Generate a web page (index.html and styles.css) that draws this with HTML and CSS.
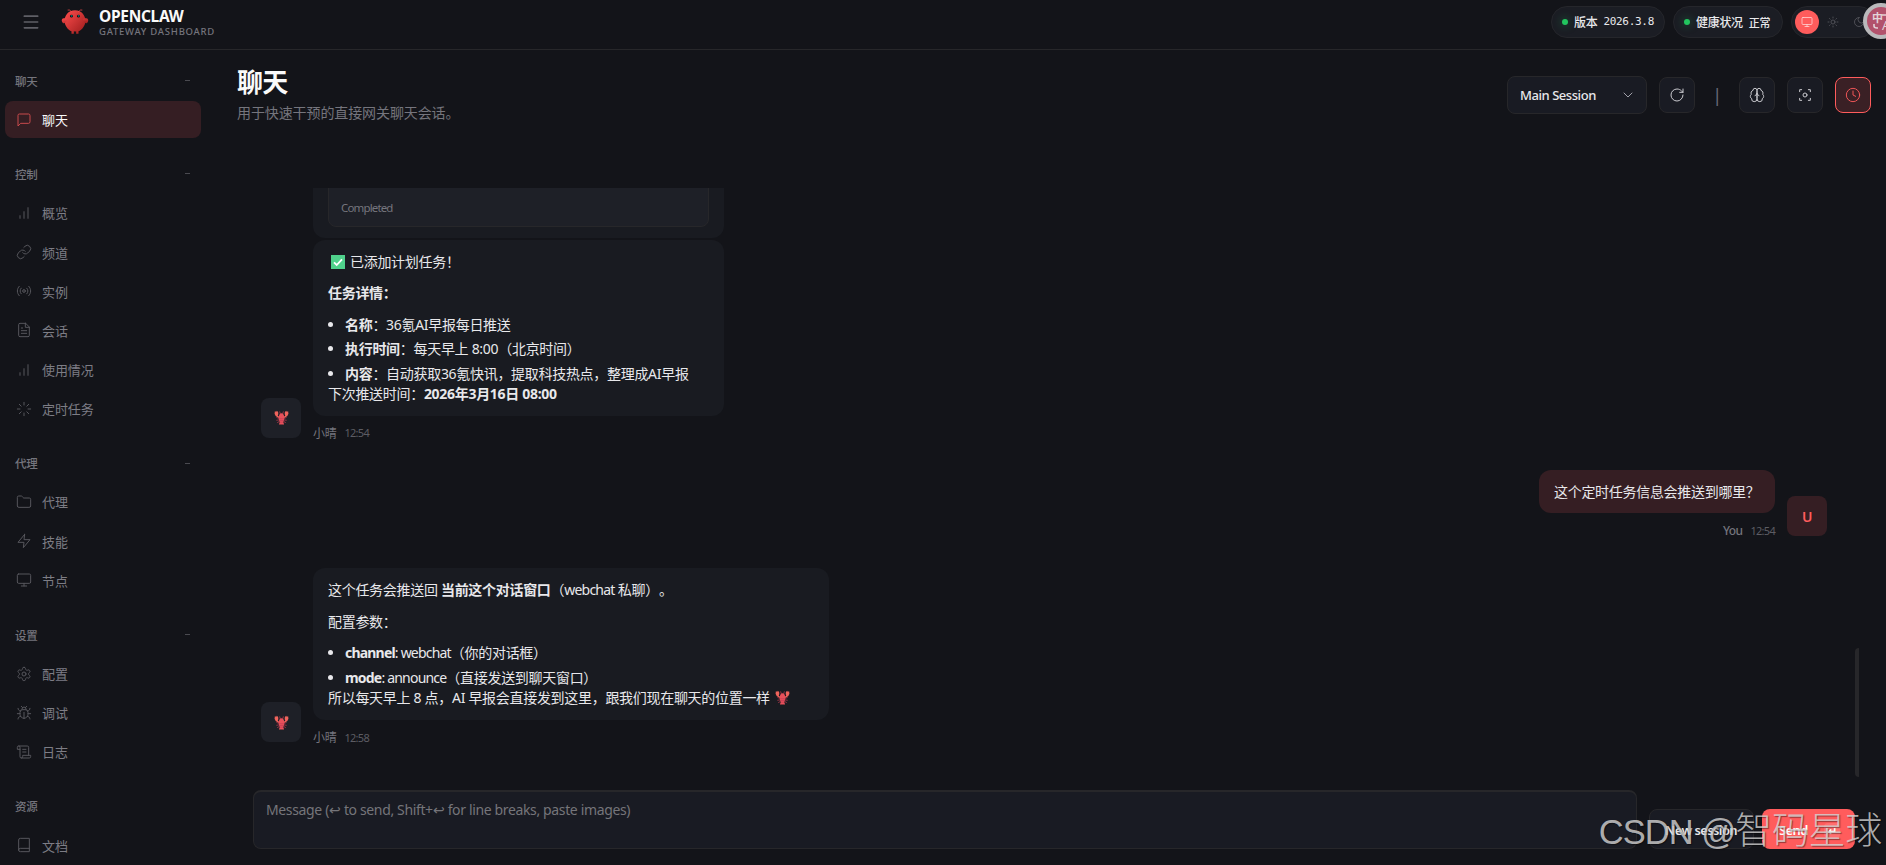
FILE: index.html
```html
<!DOCTYPE html>
<html lang="zh-CN">
  <head>
    <meta charset="UTF-8" />
    <title>OpenClaw Control</title>
    <link rel="stylesheet" href="styles.css">
  </head>
  <body>
    <svg class="sprite" width="0" height="0">
      <symbol id="i-menu" viewBox="0 0 24 24"><path d="M4 5h16M4 12h16M4 19h16"/></symbol>
      <symbol id="i-message" viewBox="0 0 24 24"><path d="M21 15a2 2 0 0 1-2 2H7l-4 4V5a2 2 0 0 1 2-2h14a2 2 0 0 1 2 2z"/></symbol>
      <symbol id="i-chart" viewBox="0 0 24 24"><path d="M12 20V10M18 20V4M6 20v-4"/></symbol>
      <symbol id="i-link" viewBox="0 0 24 24"><path d="M10 13a5 5 0 0 0 7.54.54l3-3a5 5 0 0 0-7.07-7.07l-1.72 1.71"/><path d="M14 11a5 5 0 0 0-7.54-.54l-3 3a5 5 0 0 0 7.07 7.07l1.71-1.71"/></symbol>
      <symbol id="i-radio" viewBox="0 0 24 24"><circle cx="12" cy="12" r="2"/><path d="M4.9 19.1C1 15.2 1 8.8 4.9 4.9M7.8 16.2c-2.3-2.3-2.3-6.1 0-8.5M16.2 7.8c2.3 2.3 2.3 6.1 0 8.5M19.1 4.9C23 8.8 23 15.1 19.1 19"/></symbol>
      <symbol id="i-file" viewBox="0 0 24 24"><path d="M14.5 2H6a2 2 0 0 0-2 2v16a2 2 0 0 0 2 2h12a2 2 0 0 0 2-2V7.5L14.5 2z"/><path d="M14 2v6h6M16 13H8M16 17H8M10 9H8"/></symbol>
      <symbol id="i-loader" viewBox="0 0 24 24"><path d="M12 2v4M12 18v4M4.93 4.93l2.83 2.83M16.24 16.24l2.83 2.83M2 12h4M18 12h4M4.93 19.07l2.83-2.83M16.24 7.76l2.83-2.83"/></symbol>
      <symbol id="i-folder" viewBox="0 0 24 24"><path d="M20 20a2 2 0 0 0 2-2V8a2 2 0 0 0-2-2h-7.9a2 2 0 0 1-1.69-.9L9.6 3.9A2 2 0 0 0 7.93 3H4a2 2 0 0 0-2 2v13a2 2 0 0 0 2 2Z"/></symbol>
      <symbol id="i-zap" viewBox="0 0 24 24"><path d="M13 2 3 14h9l-1 8 10-12h-9l1-8z"/></symbol>
      <symbol id="i-monitor" viewBox="0 0 24 24"><rect x="2" y="3" width="20" height="14" rx="2"/><path d="M8 21h8M12 17v4"/></symbol>
      <symbol id="i-settings" viewBox="0 0 24 24"><path d="M12.22 2h-.44a2 2 0 0 0-2 2v.18a2 2 0 0 1-1 1.73l-.43.25a2 2 0 0 1-2 0l-.15-.08a2 2 0 0 0-2.73.73l-.22.38a2 2 0 0 0 .73 2.73l.15.1a2 2 0 0 1 1 1.72v.51a2 2 0 0 1-1 1.74l-.15.09a2 2 0 0 0-.73 2.73l.22.38a2 2 0 0 0 2.73.73l.15-.08a2 2 0 0 1 2 0l.43.25a2 2 0 0 1 1 1.73V20a2 2 0 0 0 2 2h.44a2 2 0 0 0 2-2v-.18a2 2 0 0 1 1-1.73l.43-.25a2 2 0 0 1 2 0l.15.08a2 2 0 0 0 2.73-.73l.22-.39a2 2 0 0 0-.73-2.73l-.15-.08a2 2 0 0 1-1-1.74v-.5a2 2 0 0 1 1-1.74l.15-.09a2 2 0 0 0 .73-2.73l-.22-.38a2 2 0 0 0-2.73-.73l-.15.08a2 2 0 0 1-2 0l-.43-.25a2 2 0 0 1-1-1.73V4a2 2 0 0 0-2-2z"/><circle cx="12" cy="12" r="3"/></symbol>
      <symbol id="i-bug" viewBox="0 0 24 24"><path d="m8 2 1.88 1.88M14.12 3.88 16 2M9 7.13v-1a3 3 0 1 1 6 0v1M12 20a6 6 0 0 1-6-6v-3a4 4 0 0 1 4-4h4a4 4 0 0 1 4 4v3a6 6 0 0 1-6 6M12 20v-9M6.53 9C4.6 8.8 3 7.1 3 5M6 13H2M3 21c0-2.1 1.7-3.9 3.8-4M20.97 5c0 2.1-1.6 3.8-3.5 4M22 13h-4M17.2 17c2.1.1 3.8 1.9 3.8 4"/></symbol>
      <symbol id="i-scroll" viewBox="0 0 24 24"><path d="M8 21h12a2 2 0 0 0 2-2v-2H10v2a2 2 0 1 1-4 0V5a2 2 0 1 0-4 0v3h4"/><path d="M19 17V5a2 2 0 0 0-2-2H4M15 8h-5M15 12h-5"/></symbol>
      <symbol id="i-book" viewBox="0 0 24 24"><path d="M4 19.5v-15A2.5 2.5 0 0 1 6.5 2H20v20H6.5a2.5 2.5 0 0 1 0-5H20"/></symbol>
      <symbol id="i-sun" viewBox="0 0 24 24"><circle cx="12" cy="12" r="4"/><path d="M12 2v2M12 20v2M4.93 4.93l1.41 1.41M17.66 17.66l1.41 1.41M2 12h2M20 12h2M6.34 17.66l-1.41 1.41M19.07 4.93l-1.41 1.41"/></symbol>
      <symbol id="i-moon" viewBox="0 0 24 24"><path d="M12 3a6 6 0 0 0 9 9 9 9 0 1 1-9-9Z"/></symbol>
      <symbol id="i-chevron" viewBox="0 0 24 24"><path d="m6 9 6 6 6-6"/></symbol>
      <symbol id="i-refresh" viewBox="0 0 24 24"><path d="M21 12a9 9 0 1 1-9-9c2.52 0 4.93 1 6.74 2.74L21 8"/><path d="M21 3v5h-5"/></symbol>
      <symbol id="i-brain" viewBox="0 0 24 24"><path d="M12 5a3 3 0 1 0-5.997.125 4 4 0 0 0-2.526 5.77 4 4 0 0 0 .556 6.588A4 4 0 1 0 12 18Z"/><path d="M12 5a3 3 0 1 1 5.997.125 4 4 0 0 1 2.526 5.77 4 4 0 0 1-.556 6.588A4 4 0 1 1 12 18Z"/><path d="M15 13a4.5 4.5 0 0 1-3-4 4.5 4.5 0 0 1-3 4"/></symbol>
      <symbol id="i-focus" viewBox="0 0 24 24"><path d="M4 7V4h3M20 7V4h-3M4 17v3h3M20 17v3h-3"/><circle cx="12" cy="12" r="3"/></symbol>
      <symbol id="i-clock" viewBox="0 0 24 24"><circle cx="12" cy="12" r="10"/><path d="M12 6v6l4 2"/></symbol>
      <symbol id="i-lobster" viewBox="0 0 16 16">
        <path fill="#f0645c" d="M1 1l1.2 1L3 .8l1.4 1.4.2 2L4 6 6 7.4 5 8.6 1.8 6.4.6 4zM15 1l-1.2 1L13 .8l-1.4 1.4-.2 2L12 6l-2 1.4 1 1.2 3.2-2.200L15.400 4z"/>
        <path fill="none" stroke="#a83548" stroke-width=".9" d="M6.800 4.500 6 1.500M9.200 4.500 10 1.500M5.500 9 2.600 8M5.500 10.500 2.500 11M6 12l-2.600 1.500M10.500 9l2.900-1M10.500 10.500l3 .5M10 12l2.600 1.500"/>
        <path fill="#e8505a" d="M8 3.500c1.800 0 3 2.300 3 4.700 0 2-.8 3.300-1.200 4.600l1 2.600H5.200l1-2.600C5.800 11.500 5 10.200 5 8.200c0-2.400 1.200-4.700 3-4.700z"/>
        <path fill="none" stroke="#c23b55" stroke-width=".7" d="M5.600 9.300h4.800M6 11.200h4M6.200 13h3.600"/>
      </symbol>
    </svg>

    <header class="topbar">
      <button class="menu-toggle"><svg class="icon"><use href="#i-menu"/></svg></button>
      <svg class="logo" viewBox="0 0 120 120">
        <defs>
          <linearGradient id="claw" x1="0" y1="0" x2="1" y2="1">
            <stop offset="0" stop-color="#ff4d4d"/>
            <stop offset="1" stop-color="#991b1b"/>
          </linearGradient>
        </defs>
        <path fill="url(#claw)" d="M60 10C30 10 15 35 15 55s15 40 30 45v10h10v-10s5 2 10 0v10h10v-10c15-5 30-25 30-45S90 10 60 10z"/>
        <path fill="url(#claw)" d="M20 45C5 40 0 50 5 60s15 5 20-5c3-7 0-10-5-10zM100 45c15-5 20 5 15 15s-15 5-20-5c-3-7 0-10 5-10z"/>
        <path fill="none" stroke="#ff4d4d" stroke-width="3" stroke-linecap="round" d="M45 15Q35 5 30 8M75 15Q85 5 90 8"/>
        <circle cx="45" cy="35" r="6" fill="#050810"/><circle cx="75" cy="35" r="6" fill="#050810"/>
        <circle cx="46" cy="34" r="2.500" fill="#00e5cc"/><circle cx="76" cy="34" r="2.500" fill="#00e5cc"/>
      </svg>
      <div class="brand">
        <div class="brand-title">OPENCLAW</div>
        <div class="brand-sub">GATEWAY DASHBOARD</div>
      </div>
      <div class="topbar-status">
        <div class="pill pill-version"><span class="dot"></span><span>版本</span><span class="mono">2026.3.8</span></div>
        <div class="pill pill-health"><span class="dot"></span><span>健康状况</span><span class="mono">正常</span></div>
        <div class="theme-toggle">
          <button class="theme-btn active"><svg class="icon"><use href="#i-monitor"/></svg></button>
          <button class="theme-btn"><svg class="icon"><use href="#i-sun"/></svg></button>
          <button class="theme-btn"><svg class="icon"><use href="#i-moon"/></svg></button>
        </div>
      </div>
      <div class="translate-badge">
        <span class="zh">中</span><span class="en">A</span>
        <svg class="swap" viewBox="0 0 28 28"><path d="M7 17v2q0 2 3 2h1M15 8h5"/></svg>
      </div>
    </header>

    <div class="shell">
      <nav class="sidebar">
        <div class="nav-group">
          <div class="nav-label"><span>聊天</span><span class="fold"></span></div>
          <a class="nav-item active"><svg class="icon"><use href="#i-message"/></svg>聊天</a>
        </div>
        <div class="nav-group">
          <div class="nav-label"><span>控制</span><span class="fold"></span></div>
          <a class="nav-item"><svg class="icon"><use href="#i-chart"/></svg>概览</a>
          <a class="nav-item"><svg class="icon"><use href="#i-link"/></svg>频道</a>
          <a class="nav-item"><svg class="icon"><use href="#i-radio"/></svg>实例</a>
          <a class="nav-item"><svg class="icon"><use href="#i-file"/></svg>会话</a>
          <a class="nav-item"><svg class="icon"><use href="#i-chart"/></svg>使用情况</a>
          <a class="nav-item"><svg class="icon"><use href="#i-loader"/></svg>定时任务</a>
        </div>
        <div class="nav-group">
          <div class="nav-label"><span>代理</span><span class="fold"></span></div>
          <a class="nav-item"><svg class="icon"><use href="#i-folder"/></svg>代理</a>
          <a class="nav-item"><svg class="icon"><use href="#i-zap"/></svg>技能</a>
          <a class="nav-item"><svg class="icon"><use href="#i-monitor"/></svg>节点</a>
        </div>
        <div class="nav-group">
          <div class="nav-label"><span>设置</span><span class="fold"></span></div>
          <a class="nav-item"><svg class="icon"><use href="#i-settings"/></svg>配置</a>
          <a class="nav-item"><svg class="icon"><use href="#i-bug"/></svg>调试</a>
          <a class="nav-item"><svg class="icon"><use href="#i-scroll"/></svg>日志</a>
        </div>
        <div class="nav-group">
          <div class="nav-label"><span>资源</span></div>
          <a class="nav-item"><svg class="icon"><use href="#i-book"/></svg>文档</a>
        </div>
      </nav>

      <main class="content">
        <div class="content-header">
          <div>
            <h1>聊天</h1>
            <p class="page-sub">用于快速干预的直接网关聊天会话。</p>
          </div>
          <div class="chat-controls">
            <div class="session-select">Main Session<svg class="icon"><use href="#i-chevron"/></svg></div>
            <button class="icon-btn"><svg class="icon"><use href="#i-refresh"/></svg></button>
            <span class="sep">|</span>
            <button class="icon-btn"><svg class="icon"><use href="#i-brain"/></svg></button>
            <button class="icon-btn"><svg class="icon"><use href="#i-focus"/></svg></button>
            <button class="icon-btn active"><svg class="icon"><use href="#i-clock"/></svg></button>
          </div>
        </div>

        <div class="chat">
          <div class="thread">
            <div class="group">
              <div class="avatar"><svg class="lobster"><use href="#i-lobster"/></svg></div>
              <div class="messages">
                <div class="bubble tool-bubble">
                  <div class="tool-card">Completed</div>
                </div>
                <div class="bubble bubble-task">
                  <p><span class="check"><svg viewBox="0 0 14 14"><path d="M3 7.300l2.700 2.700L11 4.300"/></svg></span>已添加计划任务！</p>
                  <p><strong>任务详情：</strong></p>
                  <ul>
                    <li><strong>名称</strong>：36氪AI早报每日推送</li>
                    <li><strong>执行时间</strong>：每天早上 8:00（北京时间）</li>
                    <li><strong>内容</strong>：自动获取36氪快讯，提取科技热点，整理成AI早报</li>
                  </ul>
                  <p class="tail">下次推送时间：<strong>2026年3月16日 08:00</strong></p>
                </div>
                <div class="meta"><span class="sender">小晴</span><span class="time">12:54</span></div>
              </div>
            </div>

            <div class="group user">
              <div class="messages">
                <div class="bubble"><p>这个定时任务信息会推送到哪里？</p></div>
                <div class="meta"><span class="sender">You</span><span class="time">12:54</span></div>
              </div>
              <div class="avatar">U</div>
            </div>

            <div class="group">
              <div class="avatar"><svg class="lobster"><use href="#i-lobster"/></svg></div>
              <div class="messages">
                <div class="bubble bubble-answer">
                  <p>这个任务会推送回 <strong>当前这个对话窗口</strong>（<span class="param">webchat</span> 私聊）。</p>
                  <p>配置参数：</p>
                  <ul>
                    <li><span class="param"><strong>channel</strong>: webchat</span>（你的对话框）</li>
                    <li><span class="param"><strong>mode</strong>: announce</span>（直接发送到聊天窗口）</li>
                  </ul>
                  <p class="tail">所以每天早上 8 点，AI 早报会直接发到这里，跟我们现在聊天的位置一样 <svg class="lobster"><use href="#i-lobster"/></svg></p>
                </div>
                <div class="meta"><span class="sender">小晴</span><span class="time">12:58</span></div>
              </div>
            </div>
          </div>
          <div class="scroll-thumb"></div>
        </div>

        <div class="compose">
          <div class="compose-input">Message (↩ to send, Shift+↩ for line breaks, paste images)</div>
          <button class="btn btn-new">New session</button>
          <button class="btn btn-send">Send<span class="kbd">↵</span></button>
        </div>
      </main>
    </div>

    <div class="watermark"><span class="wm-latin">CSDN @</span><span>智码星球</span></div>
  </body>
</html>
```
FILE: styles.css
```css
:root {
  --bg: #131419;
  --card: #191b21;
  --elevated: #1e2027;
  --input: #191b23;
  --border: #27272a;
  --text: #e8e8eb;
  --muted: #75757d;
  --accent: #ff5c5c;
  --accent-subtle: #351e23;
}
* {
  box-sizing: border-box;
}
body {
  margin: 0;
  height: 865px;
  overflow: hidden;
  background: var(--bg);
  color: var(--text);
  font-family: "Noto Sans", "Noto Sans CJK SC", sans-serif;
  font-size: 14px;
  letter-spacing: -0.300px;
  text-spacing-trim: space-all;
}
button {
  font: inherit;
  letter-spacing: inherit;
  color: inherit;
  background: none;
  border: none;
  padding: 0;
}
h1, p, ul {
  margin: 0;
  padding: 0;
}
.sprite {
  position: absolute;
}
.icon {
  width: 16px;
  height: 16px;
  flex: none;
  fill: none;
  stroke: currentColor;
  stroke-width: 1.5;
  stroke-linecap: round;
  stroke-linejoin: round;
}

/* top bar */
.topbar {
  display: flex;
  align-items: center;
  height: 50px;
  padding: 0 11px 6px 21px;
  border-bottom: 1px solid var(--border);
}
.menu-toggle {
  display: flex;
  color: #5f5f66;
}
.menu-toggle .icon {
  width: 20px;
  height: 20px;
  stroke-width: 2;
}
.logo {
  width: 28px;
  height: 28px;
  margin: 0 10px 0 20px;
}
.brand-title {
  margin-top: 1px;
  color: #fafafa;
  font-size: 15.500px;
  font-weight: 700;
  line-height: 18px;
  letter-spacing: -0.300px;
}
.brand-sub {
  color: var(--muted);
  font-size: 9.500px;
  font-weight: 500;
  line-height: 13px;
  letter-spacing: 0.750px;
}
.topbar-status {
  display: flex;
  gap: 8px;
  margin-left: auto;
}
.pill {
  display: flex;
  align-items: center;
  gap: 6px;
  height: 32px;
  padding: 0 10px;
  border: 1px solid #25262b;
  border-radius: 16px;
  background: #1b1d24;
  font-size: 12px;
  font-weight: 500;
  white-space: nowrap;
}
.pill-version {
  width: 114px;
}
.pill-health {
  width: 110px;
}
.dot {
  width: 6px;
  height: 6px;
  flex: none;
  border-radius: 50%;
  background: #22c55e;
  box-shadow: 0 0 8px rgba(34, 197, 94, 0.5);
}
.mono {
  font-family: "DejaVu Sans Mono", "Noto Sans CJK SC", monospace;
  font-size: 11px;
}
.theme-toggle {
  display: flex;
  align-items: center;
  gap: 2px;
  width: 84px;
  height: 32px;
  padding: 0 3px;
  border: 1px solid #25262b;
  border-radius: 16px;
  background: #1b1d24;
}
.theme-btn {
  display: flex;
  align-items: center;
  justify-content: center;
  width: 24px;
  height: 24px;
  border-radius: 50%;
  color: #5d5d64;
}
.theme-btn .icon {
  width: 12px;
  height: 12px;
}
.theme-btn.active {
  background: var(--accent);
  color: #ffd9d9;
}
.translate-badge {
  position: absolute;
  top: 3px;
  right: -13px;
  width: 36px;
  height: 36px;
  border: 4px solid #b9b9bb;
  border-radius: 50%;
  background: #b2526c;
  color: #e3d3d8;
  line-height: 1;
}
.translate-badge .zh {
  position: absolute;
  left: 5px;
  top: 5px;
  font-size: 11px;
  font-weight: 700;
}
.translate-badge .en {
  position: absolute;
  left: 15px;
  top: 12px;
  font-size: 13px;
}
.translate-badge .swap {
  display: block;
  width: 28px;
  height: 28px;
  fill: none;
  stroke: #e3d3d8;
  stroke-width: 1.600;
}

/* navigation */
.shell {
  display: flex;
  height: 815px;
}
.sidebar {
  display: flex;
  flex-direction: column;
  gap: 23.500px;
  flex: none;
  width: 221px;
  padding: 18.800px 20px 0 5px;
  overflow: hidden;
}
.nav-group {
  display: flex;
  flex-direction: column;
  gap: 2px;
}
.nav-label {
  display: flex;
  align-items: center;
  justify-content: space-between;
  height: 24px;
  margin-bottom: 6.500px;
  padding: 0 11px 0 10px;
  color: var(--muted);
  font-size: 11.500px;
  font-weight: 500;
}
.fold {
  width: 5px;
  height: 1px;
  background: #4a4a50;
}
.nav-item {
  display: flex;
  align-items: center;
  gap: 10px;
  height: 37.200px;
  padding: 0 11px 0.500px;
  border-radius: 8px;
  color: #7d7d85;
  font-size: 13px;
  letter-spacing: -0.100px;
}
.nav-item .icon {
  color: #56565c;
}
.nav-item.active {
  background: var(--accent-subtle);
  color: #fafafa;
}
.nav-item.active .icon {
  color: #c94a4c;
}

/* main column */
.content {
  display: flex;
  flex-direction: column;
  flex: 1;
  min-width: 0;
  padding: 0 15px 0 16px;
}
.content-header {
  display: flex;
  justify-content: space-between;
  align-items: flex-start;
  height: 138px;
  padding-top: 16px;
}
h1 {
  color: #fafafa;
  font-size: 26px;
  font-weight: 700;
  line-height: 32px;
  letter-spacing: -0.800px;
}
.page-sub {
  margin-top: 5px;
  color: var(--muted);
  line-height: 20px;
  letter-spacing: -0.100px;
}
.chat-controls {
  display: flex;
  align-items: center;
  gap: 12px;
  height: 38px;
  margin-top: 10px;
}
.session-select {
  display: flex;
  align-items: center;
  justify-content: space-between;
  width: 140px;
  height: 38px;
  padding: 0 10px 0 12px;
  border: 1px solid var(--border);
  border-radius: 8px;
  background: var(--input);
  font-size: 13px;
  font-weight: 500;
  letter-spacing: -0.450px;
}
.session-select .icon {
  color: #a1a1aa;
}
.icon-btn {
  display: flex;
  align-items: center;
  justify-content: center;
  width: 36px;
  height: 36px;
  border: 1px solid var(--border);
  border-radius: 8px;
  background: var(--input);
  color: #c9c9ce;
}
.icon-btn.active {
  border-color: var(--accent);
  background: #3a2025;
  color: #ef5557;
}
.sep {
  width: 20px;
  color: #6a6a78;
  font-size: 18px;
  text-align: center;
}
.chat {
  display: flex;
  align-items: flex-end;
  height: 589px;
  padding: 0 12px 0 24px;
}
.thread {
  display: flex;
  flex-direction: column;
  justify-content: flex-end;
  gap: 28.500px;
  flex: 1;
  height: 100%;
  padding: 0 28px 31px 0;
  overflow: hidden;
}
.scroll-thumb {
  width: 4px;
  height: 129px;
  border-radius: 4px 0 0 4px;
  background: var(--border);
}
.group {
  display: flex;
  align-items: flex-end;
  gap: 12px;
}
.group.user {
  justify-content: flex-end;
}
.avatar {
  display: flex;
  align-items: center;
  justify-content: center;
  flex: none;
  width: 40px;
  height: 40px;
  margin-bottom: 4px;
  border-radius: 8px;
  background: var(--elevated);
  font-weight: 600;
}
.user .avatar {
  margin-bottom: 3px;
  background: var(--accent-subtle);
  color: var(--accent);
}
.lobster {
  width: 15px;
  height: 15px;
  vertical-align: -2px;
}
.bubble {
  padding: 12px 15px 11px;
  border-radius: 12px;
  background: var(--card);
  line-height: 20.500px;
  white-space: nowrap;
}
.bubble p + p,
.bubble ul {
  margin-top: 11px;
}
.bubble ul {
  list-style: none;
}
.bubble li {
  position: relative;
  padding-left: 17px;
}
.bubble li + li {
  margin-top: 4px;
}
.bubble li::before {
  content: "";
  position: absolute;
  left: 0;
  top: 7px;
  width: 5px;
  height: 5px;
  border-radius: 50%;
  background: var(--text);
}
.param {
  letter-spacing: -0.800px;
}
.bubble .lobster {
  margin-left: 2px;
}
.user .bubble {
  width: 236px;
  padding: 11.500px 15px 11px;
  background: var(--accent-subtle);
}
.tool-bubble {
  margin-bottom: 2px;
}
.tool-card {
  height: 60px;
  padding: 32px 12px 0;
  border: 1px solid var(--border);
  border-radius: 8px;
  background: var(--elevated);
  color: var(--muted);
  font-size: 11.500px;
  line-height: 16px;
  letter-spacing: -0.850px;
}
.bubble-task {
  width: 411px;
}
.bubble-answer {
  width: 515.500px;
  padding: 12.500px 15px 11.500px;
}
.check {
  display: inline-block;
  width: 14px;
  height: 14px;
  margin: 0 5px 0 3px;
  background: #4fd18b;
  vertical-align: -2px;
}
.check svg {
  display: block;
  fill: none;
  stroke: #fff;
  stroke-width: 1.800;
}
.meta {
  display: flex;
  align-items: center;
  gap: 8px;
  height: 18px;
  margin-top: 8px;
  color: var(--muted);
  font-size: 12px;
}
.user .meta {
  justify-content: flex-end;
  font-weight: 500;
}
.user .sender {
  letter-spacing: -0.600px;
}
.time {
  color: #5c5c63;
  font-size: 11px;
  font-weight: 400;
  letter-spacing: -0.700px;
}

/* composer */
.compose {
  display: flex;
  align-items: flex-end;
  height: 72px;
  padding: 0 16px;
}
.compose-input {
  flex: 1;
  height: 59px;
  margin-right: 12px;
  padding: 9px 12px;
  border: 1px solid var(--border);
  border-top-width: 2px;
  border-radius: 8px;
  background: var(--input);
  color: #75757a;
  line-height: 18px;
  letter-spacing: -0.360px;
}
.btn {
  display: flex;
  align-items: center;
  height: 40px;
  border-radius: 8px;
  font-size: 13px;
  font-weight: 600;
  letter-spacing: -0.600px;
  white-space: nowrap;
}
.btn-new {
  width: 105px;
  margin-right: 8px;
  padding: 2px 15px 0;
  border: 1px solid var(--border);
  background: var(--input);
}
.btn-send {
  gap: 16px;
  width: 93px;
  padding: 2px 17px 0;
  background: var(--accent);
  color: #fff;
}
.kbd {
  padding: 0 4px;
  border-radius: 4px;
  background: rgba(255, 255, 255, 0.12);
  font-size: 11px;
}

.watermark {
  position: absolute;
  right: 4px;
  bottom: 8px;
  display: flex;
  align-items: center;
  color: rgba(215, 215, 215, 0.8);
  font-family: "Liberation Sans", "Noto Sans CJK SC", sans-serif;
  font-size: 37px;
  font-weight: 300;
  line-height: 50px;
  letter-spacing: -0.300px;
  text-shadow: 1px 1px 1px rgba(0, 0, 0, 0.4);
}
.wm-latin {
  font-size: 34.500px;
  letter-spacing: -1px;
  white-space: pre;
}
```
